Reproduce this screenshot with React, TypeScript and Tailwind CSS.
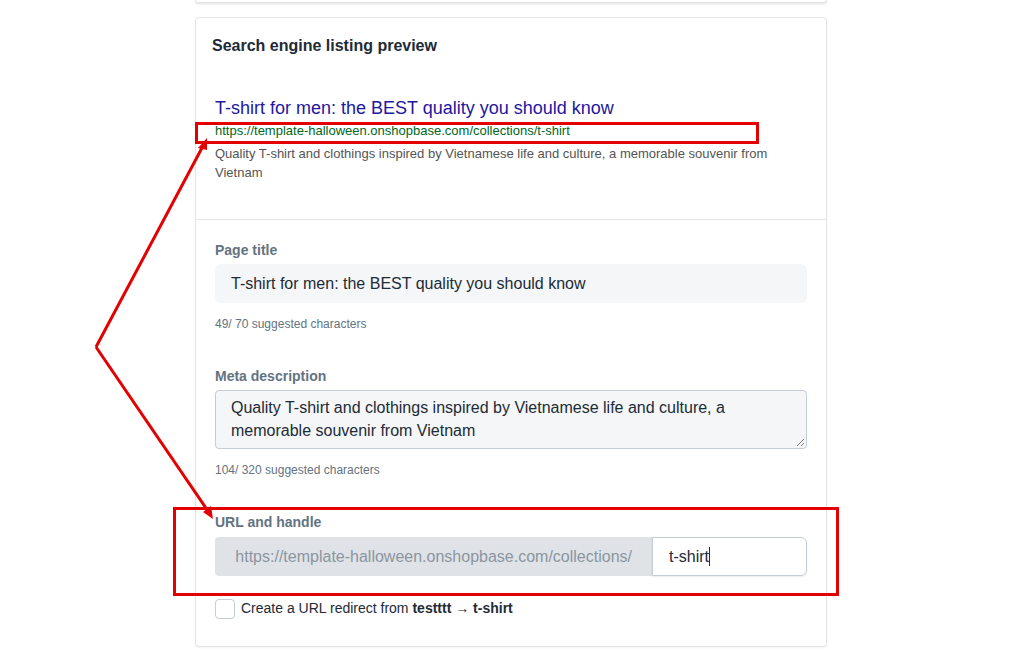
import React from 'react';

const font = { fontFamily: '"Liberation Sans", Arial, sans-serif' };

function Label({ children }: { children: React.ReactNode }) {
  return <div className="text-[14px] leading-4 font-bold text-[#637381]">{children}</div>;
}

export default function App() {
  return (
    <div className="relative w-full min-h-[668px] bg-white text-[#212b36]" style={font}>
      <div className="ml-[195px] w-[632px] flex flex-col">
        {/* previous card, only its bottom edge shows */}
        <div className="h-[3px] rounded-b border-x border-b border-[#e3e5e8] shadow-sm" />

        {/* SEO card */}
        <div className="mt-[14px] rounded border border-[#e3e5e8] shadow-[0_1px_2px_rgba(0,0,0,0.05)] bg-white">
          <div className="pt-[18px] pb-[37px]">
            <h2 className="px-4 text-[16px] leading-5 font-bold text-[#212b36]">Search engine listing preview</h2>
            <div className="px-[19px] mt-[41px]">
              <div className="text-[18px] leading-[22px] text-[#22179f]">T-shirt for men: the BEST quality you should know</div>
              <div className="mt-1 text-[13px] leading-4 text-[#006621]">
                https://template-halloween.onshopbase.com/collections/t-shirt
              </div>
              <p className="mt-[5px] text-[13px] leading-[19px] text-[#545454] pr-4">
                Quality T-shirt and clothings inspired by Vietnamese life and culture, a memorable souvenir from Vietnam
              </p>
            </div>
          </div>

          <div className="border-t border-[#e3e5e8] px-[19px] pt-[22px] pb-[27px]">
            <Label>Page title</Label>
            <div className="mt-[6px] h-[39px] rounded-md bg-[#f4f6f8] flex items-center px-4 text-[16px] text-[#212b36]">
              T-shirt for men: the BEST quality you should know
            </div>
            <div className="mt-[13px] text-[12px] leading-4 text-[#637381]">49/ 70 suggested characters</div>

            <div className="mt-9">
              <Label>Meta description</Label>
            </div>
            <div className="relative mt-[6px] h-[59px] rounded border border-[#c4cdd5] bg-[#f4f6f8] px-[15px] pt-[5px] text-[16px] leading-[23px] text-[#212b36]">
              Quality T-shirt and clothings inspired by Vietnamese life and culture, a memorable souvenir from Vietnam
              <svg className="absolute right-[1px] bottom-[1px]" width="9" height="9" viewBox="0 0 9 9">
                <path d="M8 1 L1 8 M8 5 L5 8" stroke="#777" strokeWidth="1" />
              </svg>
            </div>
            <div className="mt-[13px] text-[12px] leading-4 text-[#637381]">104/ 320 suggested characters</div>

            <div className="mt-9">
              <Label>URL and handle</Label>
            </div>
            <div className="mt-[7px] flex h-[39px]">
              <div className="w-[437px] rounded-l bg-[#dfe3e8] flex items-center justify-end pr-5 text-[16px] text-[#8c959e]">
                https://template-halloween.onshopbase.com/collections/
              </div>
              <div className="flex-1 rounded-r-md border border-[#c4cdd5] bg-white flex items-center pl-4 text-[16px] text-[#212b36] shadow-[0_1px_2px_rgba(0,0,0,0.08)]">
                t-shirt<span className="inline-block w-px h-[19px] bg-[#212b36]" />
              </div>
            </div>

            <label className="mt-[22px] flex items-center gap-[6px] text-[14px] text-[#212b36]">
              <span className="w-5 h-5 rounded border border-[#c4cdd5] bg-white" />
              <span>
                Create a URL redirect from <b>testttt → t-shirt</b>
              </span>
            </label>
          </div>
        </div>
      </div>

      {/* annotations */}
      <div className="absolute left-[195px] top-[122px] w-[564px] h-[22px] border-[3px] border-[#e30000] pointer-events-none" />
      <div className="absolute left-[173px] top-[507px] w-[666px] h-[89px] border-[3px] border-[#e30000] pointer-events-none" />
      <svg className="absolute left-0 top-0 pointer-events-none" width="1031" height="668" viewBox="0 0 1031 668">
        <g stroke="#e30000" strokeWidth="3" fill="none">
          <path d="M96 347 L203 146" />
          <path d="M96 347 L208 511" />
        </g>
        <g fill="#e30000">
          <polygon points="207,138 198,148 207,150" />
          <polygon points="213,519 203,512 211,506" />
        </g>
      </svg>
    </div>
  );
}
